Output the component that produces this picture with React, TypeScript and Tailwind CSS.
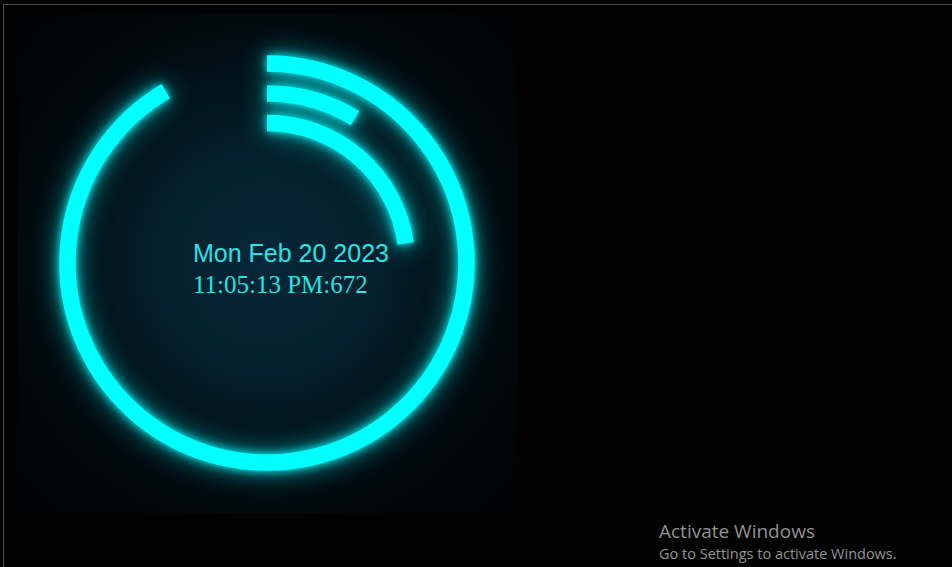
const CX = 220
const CY = 220

function arc(r: number, deg: number) {
  const a = (deg * Math.PI) / 180
  const x = CX + r * Math.sin(a)
  const y = CY - r * Math.cos(a)
  const large = deg > 180 ? 1 : 0
  return `M ${CX} ${CY - r} A ${r} ${r} 0 ${large} 1 ${x.toFixed(2)} ${y.toFixed(2)}`
}

const rings = [
  { r: 199.5, deg: 329.5 }, // hours
  { r: 169.5, deg: 31.3 }, // minutes
  { r: 140, deg: 82 }, // seconds
]

function Clock() {
  return (
    <div className="relative w-[440px] h-[440px]">
      <svg
        width="440"
        height="440"
        viewBox="0 0 440 440"
        className="absolute inset-0 overflow-visible [filter:drop-shadow(0_0_5px_#00ffff)_drop-shadow(0_0_12px_rgba(0,255,255,0.55))]"
      >
        {rings.map((ring, i) => (
          <path key={i} d={arc(ring.r, ring.deg)} fill="none" stroke="#00ffff" strokeWidth="16.5" strokeLinecap="butt" />
        ))}
      </svg>
      <div className="absolute left-[146px] top-[196px] text-[#2ae2e2] whitespace-nowrap">
        <p className="text-[25px] leading-[28px] font-['Liberation_Sans',Arial,sans-serif]">Mon Feb 20 2023</p>
        <p className="mt-[3px] text-[25px] leading-[30px] font-['Liberation_Serif','Times_New_Roman',serif]">11:05:13 PM:672</p>
      </div>
    </div>
  )
}

export default function App() {
  return (
    <div className="relative w-full h-[567px] overflow-hidden bg-[#020202]">
      <div className="ml-[3px] mt-[4px] h-full border-l border-t border-[#4b4b4b]">
        <div className="ml-[13px] mt-[8px] w-[500px] h-[500px] flex items-center justify-center bg-[radial-gradient(circle_at_center,#06283a_0%,#04202c_30%,#021219_55%,#01070a_75%,#000203_100%)]">
          <Clock />
        </div>
      </div>

      <div className="absolute left-[659px] top-[520px] text-[#929292] font-['Open_Sans','Noto_Sans',sans-serif] whitespace-nowrap">
        <p className="text-[19px] leading-[23px]">Activate Windows</p>
        <p className="mt-[1px] text-[14.5px] leading-[19px]">Go to Settings to activate Windows.</p>
      </div>
    </div>
  )
}
